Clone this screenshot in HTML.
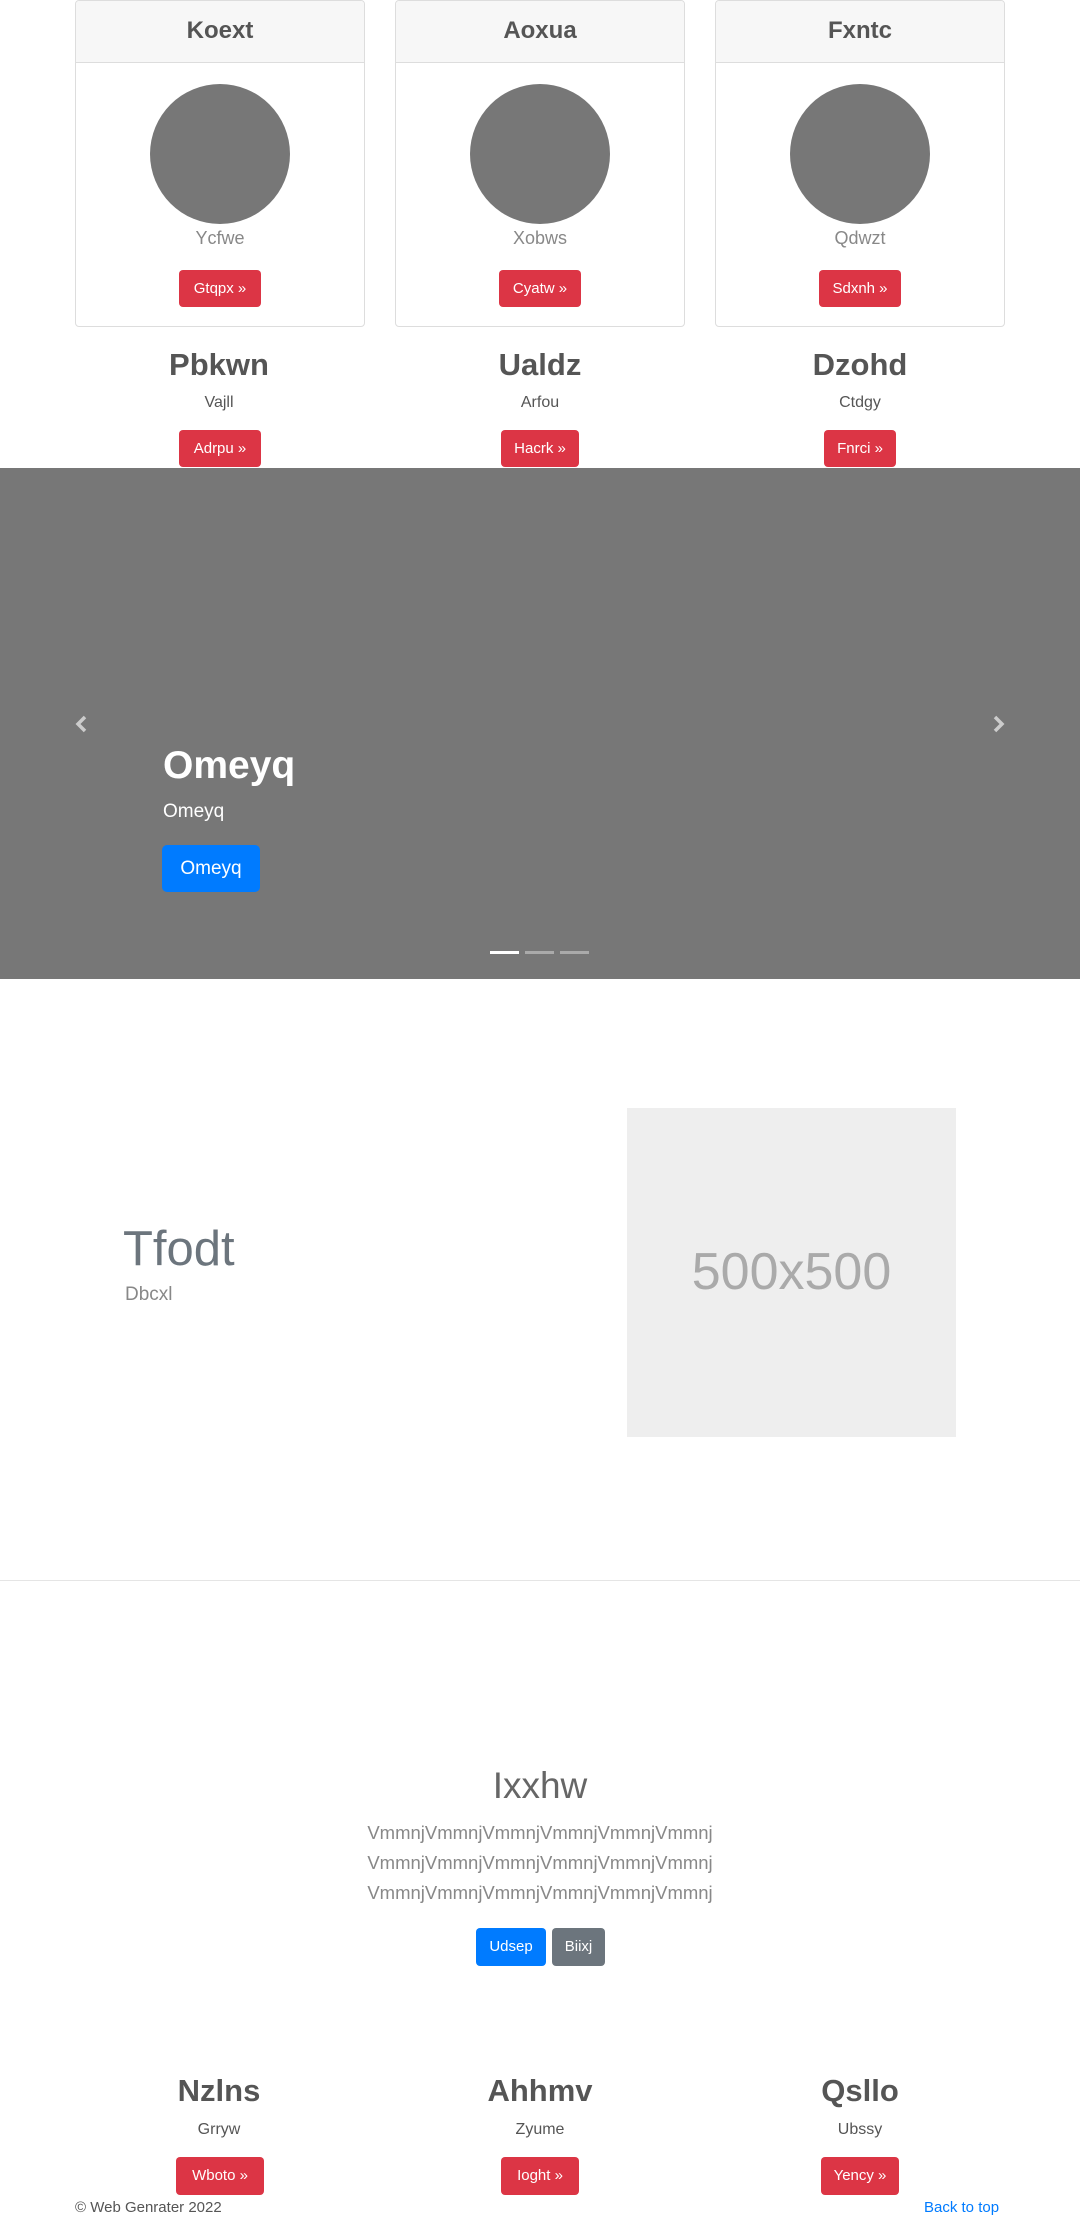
<!DOCTYPE html>
<html><head><meta charset="utf-8"><style>
*{box-sizing:border-box;margin:0;padding:0}
body{width:1080px;height:2219px;position:relative;font-family:"Liberation Sans",sans-serif;color:#555;background:#fff;overflow:hidden}
.a{position:absolute}
.c{text-align:center}
.card{position:absolute;top:0;width:290px;height:327px;border:1px solid #ddd;border-radius:4px;overflow:hidden}
.card .h{height:62px;background:#f7f7f7;border-bottom:1px solid #ddd;font-size:24px;font-weight:bold;line-height:60px;text-align:center;color:#555}
.circ{position:absolute;left:74px;top:83px;width:140px;height:140px;border-radius:50%;background:#777}
.card .n{position:absolute;top:227px;width:100%;text-align:center;font-size:18px;color:#888}
.btn{position:absolute;height:37px;line-height:37px;color:#fff;background:#dc3545;border-radius:4px;font-size:15px;text-align:center}
.h2{position:absolute;width:300px;text-align:center;font-size:31px;font-weight:bold;color:#555}
.s{position:absolute;width:300px;text-align:center;font-size:16px;color:#555}
</style></head><body>
<div class="card" style="left:75px"><div class="h">Koext</div><div class="circ"></div><div class="n">Ycfwe</div><div class="btn" style="left:103px;top:269px;width:82px">Gtqpx »</div></div>
<div class="card" style="left:395px"><div class="h">Aoxua</div><div class="circ"></div><div class="n">Xobws</div><div class="btn" style="left:103px;top:269px;width:82px">Cyatw »</div></div>
<div class="card" style="left:715px"><div class="h">Fxntc</div><div class="circ"></div><div class="n">Qdwzt</div><div class="btn" style="left:103px;top:269px;width:82px">Sdxnh »</div></div>

<div class="h2" style="left:69px;top:347px">Pbkwn</div><div class="s" style="left:69px;top:394px">Vajll</div><div class="btn" style="left:179px;top:430px;width:82px">Adrpu »</div>
<div class="h2" style="left:390px;top:347px">Ualdz</div><div class="s" style="left:390px;top:394px">Arfou</div><div class="btn" style="left:501px;top:430px;width:78px">Hacrk »</div>
<div class="h2" style="left:710px;top:347px">Dzohd</div><div class="s" style="left:710px;top:394px">Ctdgy</div><div class="btn" style="left:824px;top:430px;width:72px">Fnrci »</div>

<div class="a" style="left:0;top:468px;width:1080px;height:511px;background:#777"></div>
<svg class="a" style="left:74px;top:715px" width="14" height="18" viewBox="0 0 14 18"><path d="M11 2 L4 9 L11 16" stroke="#ccc" stroke-width="3.5" fill="none"/></svg>
<svg class="a" style="left:992px;top:715px" width="14" height="18" viewBox="0 0 14 18"><path d="M3 2 L10 9 L3 16" stroke="#ccc" stroke-width="3.5" fill="none"/></svg>
<div class="a" style="left:163px;top:744px;font-size:39px;font-weight:bold;color:#fff">Omeyq</div>
<div class="a" style="left:163px;top:801px;font-size:19px;color:#fff">Omeyq</div>
<div class="a" style="left:162px;top:845px;width:98px;height:47px;line-height:47px;background:#007bff;color:#fff;border-radius:5px;font-size:19px;text-align:center">Omeyq</div>
<div class="a" style="left:490px;top:951px;width:29px;height:3px;background:#fff"></div>
<div class="a" style="left:525px;top:951px;width:29px;height:3px;background:#aaa"></div>
<div class="a" style="left:560px;top:951px;width:29px;height:3px;background:#aaa"></div>

<div class="a" style="left:123px;top:1221px;font-size:49px;color:#6c757d">Tfodt</div>
<div class="a" style="left:125px;top:1284px;font-size:19px;color:#888">Dbcxl</div>
<div class="a c" style="left:627px;top:1108px;width:329px;height:329px;background:#eee;line-height:329px;font-size:52px;color:#aaa">500x500</div>

<div class="a" style="left:0;top:1580px;width:1080px;height:1px;background:#e5e5e5"></div>

<div class="a c" style="left:0;top:1765px;width:1080px;font-size:37px;color:#666">Ixxhw</div>
<div class="a c" style="left:0;top:1818px;width:1080px;font-size:18.5px;line-height:30px;color:#888">VmmnjVmmnjVmmnjVmmnjVmmnjVmmnj<br>VmmnjVmmnjVmmnjVmmnjVmmnjVmmnj<br>VmmnjVmmnjVmmnjVmmnjVmmnjVmmnj</div>
<div class="btn" style="left:476px;top:1928px;width:70px;height:38px;background:#007bff">Udsep</div>
<div class="btn" style="left:552px;top:1928px;width:53px;height:38px;background:#6c757d">Biixj</div>

<div class="h2" style="left:69px;top:2073px">Nzlns</div><div class="s" style="left:69px;top:2121px">Grryw</div><div class="btn" style="left:176px;top:2157px;width:88px;height:38px">Wboto »</div>
<div class="h2" style="left:390px;top:2073px">Ahhmv</div><div class="s" style="left:390px;top:2121px">Zyume</div><div class="btn" style="left:501px;top:2157px;width:78px;height:38px">Ioght »</div>
<div class="h2" style="left:710px;top:2073px">Qsllo</div><div class="s" style="left:710px;top:2121px">Ubssy</div><div class="btn" style="left:821px;top:2157px;width:78px;height:38px">Yency »</div>
<div class="a" style="left:75px;top:2199px;font-size:15px;color:#555">© Web Genrater 2022</div>
<div class="a" style="left:924px;top:2199px;font-size:15px;color:#007bff">Back to top</div>
</body></html>
